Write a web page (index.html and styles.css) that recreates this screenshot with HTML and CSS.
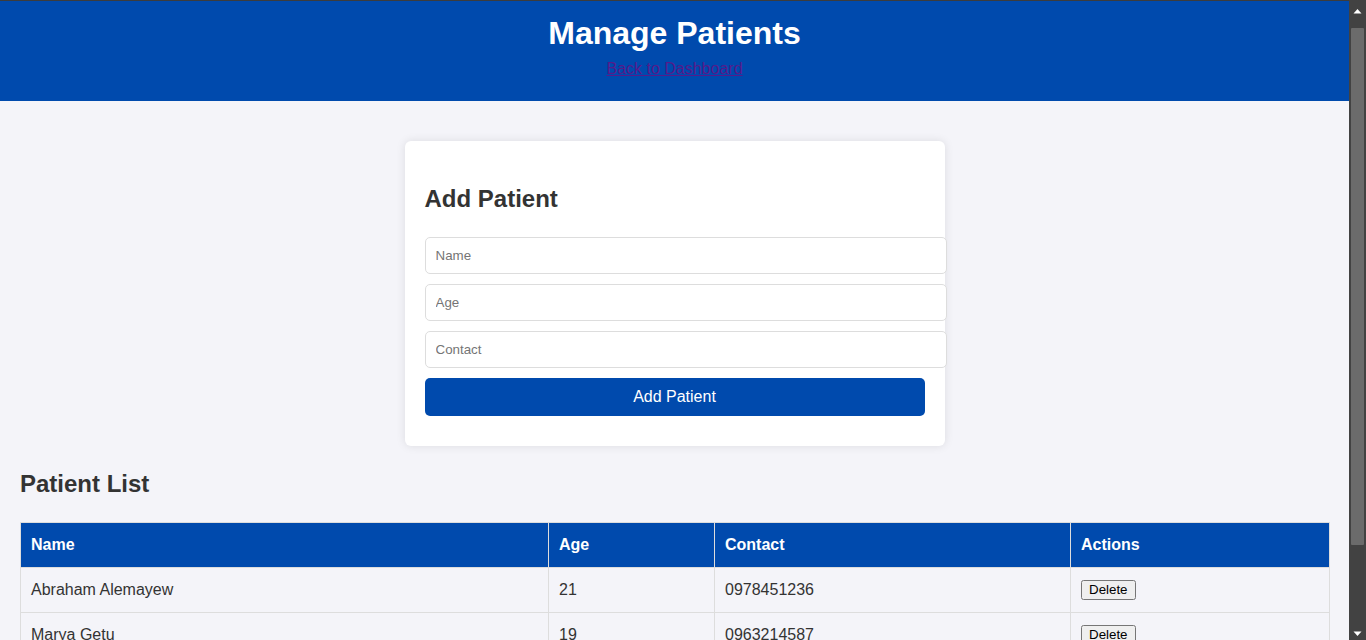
FILE: index.html
```html
<!DOCTYPE html>
<html lang="en">
<head>
<meta charset="utf-8">
<title>Manage Patients</title>
<link rel="stylesheet" href="styles.css">
</head>
<body>
<div class="viewport">
  <header class="top">
    <h1 class="top-title">Manage Patients</h1>
    <a class="back-link" href="#">Back to Dashboard</a>
  </header>
  <main class="page">
    <section class="card">
      <h2 class="section-title">Add Patient</h2>
      <form class="patient-form">
        <input class="field" type="text" placeholder="Name">
        <input class="field" type="text" placeholder="Age">
        <input class="field" type="text" placeholder="Contact">
        <button class="submit-btn" type="button">Add Patient</button>
      </form>
    </section>
    <h2 class="section-title">Patient List</h2>
    <table class="patients">
      <thead>
        <tr>
          <th class="col-name">Name</th>
          <th class="col-age">Age</th>
          <th class="col-contact">Contact</th>
          <th class="col-actions">Actions</th>
        </tr>
      </thead>
      <tbody>
        <tr>
          <td>Abraham Alemayew</td>
          <td>21</td>
          <td>0978451236</td>
          <td><button class="delete-btn" type="button">Delete</button></td>
        </tr>
        <tr>
          <td>Marya Getu</td>
          <td>19</td>
          <td>0963214587</td>
          <td><button class="delete-btn" type="button">Delete</button></td>
        </tr>
      </tbody>
    </table>
  </main>
</div>
<div class="scrollbar" aria-hidden="true">
  <svg class="scrollbar-svg" width="17" height="640" viewBox="0 0 17 640">
    <rect x="0" y="0" width="17" height="640" fill="#424242"/>
    <rect x="2" y="28" width="13" height="517" rx="1" fill="#6b6b6b"/>
    <polygon points="4.5,13.5 12.5,13.5 8.5,9" fill="#ffffff"/>
    <polygon points="4.5,631.5 12.5,631.5 8.5,636" fill="#ffffff"/>
  </svg>
</div>
</body>
</html>
```

FILE: styles.css
```css
html {
  background: #f4f4f9;
}

body {
  margin: 0;
  height: 100vh;
  display: flex;
  overflow: hidden;
  background: #f4f4f9;
  color: #333;
  font-family: "Liberation Sans", Arial, sans-serif;
  font-size: 16px;
}

.viewport {
  flex: 1;
  min-width: 0;
  height: 100vh;
  overflow: hidden;
}

.scrollbar {
  flex: 0 0 17px;
  width: 17px;
  height: 100vh;
  background: #424242;
}

.scrollbar-svg {
  display: block;
}

.top {
  background: #004aad;
  border-top: 1px solid #3c3c3c;
  padding: 14px 0 23px;
  text-align: center;
}

.top-title {
  margin: 0 0 8px;
  color: #fff;
  font-size: 32px;
  line-height: 37px;
  font-weight: bold;
}

.back-link {
  color: #551a8b;
  font-size: 16px;
  line-height: 18px;
}

.page {
  padding: 20px;
}

.card {
  width: 500px;
  margin: 20px auto 0;
  padding: 20px;
  background: #fff;
  border-radius: 6px;
  box-shadow: 0 0 10px rgba(0, 0, 0, 0.1);
}

.section-title {
  margin: 24px 0;
  font-size: 24px;
  line-height: 28px;
  font-weight: bold;
  color: #333;
}

.patient-form {
  margin: 0;
}

.field {
  display: block;
  width: 100%;
  margin: 0 0 10px;
  padding: 10px;
  border: 1px solid #ddd;
  border-radius: 5px;
  font-family: "Liberation Sans", Arial, sans-serif;
  font-size: 13.333px;
  line-height: 15px;
  background: #fff;
  color: #333;
}

.field::placeholder {
  color: #757575;
}

.submit-btn {
  display: block;
  width: 100%;
  margin: 0 0 10px;
  padding: 10px;
  border: none;
  border-radius: 5px;
  background: #004aad;
  color: #fff;
  font-family: "Liberation Sans", Arial, sans-serif;
  font-size: 16px;
  line-height: 18px;
  cursor: pointer;
}

.patients {
  width: 100%;
  border-collapse: collapse;
  table-layout: fixed;
}

.patients th,
.patients td {
  border: 1px solid #ddd;
  padding: 12px 10px;
  text-align: left;
  line-height: 20px;
  font-size: 16px;
}

.patients th {
  background: #004aad;
  color: #fff;
  font-weight: bold;
}

.col-name { width: 507px; }
.col-age { width: 145px; }
.col-contact { width: 335px; }
.col-actions { width: 238px; }

.delete-btn {
  font-family: "Liberation Sans", Arial, sans-serif;
  font-size: 13.333px;
  line-height: 14px;
  padding: 1px 6px;
  vertical-align: top;
}
```
